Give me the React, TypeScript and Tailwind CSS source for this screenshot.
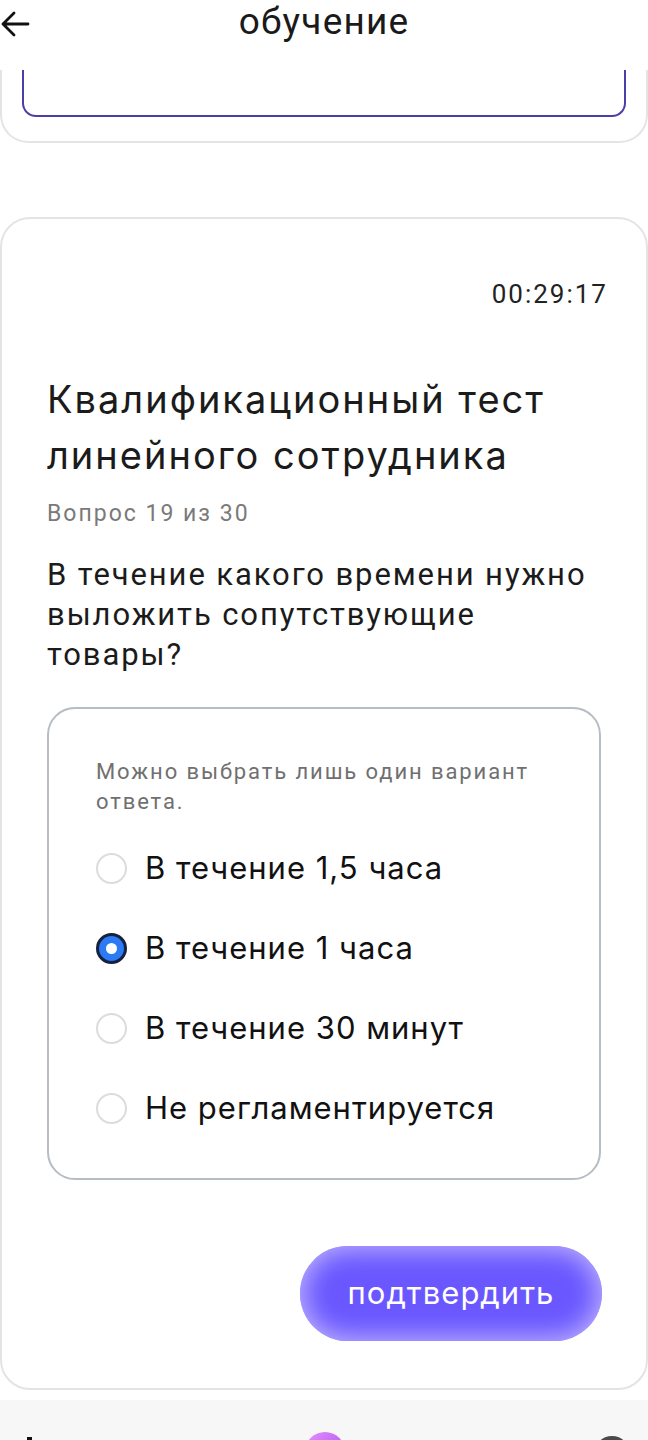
import React from "react";

const options = [
  "В течение 1,5 часа",
  "В течение 1 часа",
  "В течение 30 минут",
  "Не регламентируется",
];

export default function App() {
  const selected = 1;
  return (
    <div className="w-[648px] h-[1440px] overflow-hidden bg-white flex flex-col" style={{ fontFamily: "Inter, 'Noto Sans', sans-serif" }}>
      {/* header */}
      <div className="h-[70px] shrink-0 relative flex items-start justify-center bg-white">
        <svg className="absolute left-0 top-[10px]" width="30" height="28" viewBox="0 0 30 28" fill="none">
          <path d="M28 14H3M14 3L3 14L14 25" stroke="#111" strokeWidth="2.8" strokeLinecap="round" strokeLinejoin="round" />
        </svg>
        <span className="text-[37px] leading-[44px] tracking-[1.2px] text-[#1a1a1a]" style={{ fontFamily: "Roboto, Arial, sans-serif" }}>обучение</span>
      </div>
      {/* previous card remnant */}
      <div className="h-[73px] shrink-0 border-x-2 border-b-2 border-[#e4e4e4] rounded-b-[28px] px-[20px]">
        <div className="h-[47px] border-x-2 border-b-2 border-[#4a3ea8] rounded-b-[14px]" />
      </div>
      <div className="h-[74px] shrink-0" />
      {/* main card */}
      <div className="h-[1173px] shrink-0 border-2 border-[#e4e4e4] rounded-[30px] flex flex-col pl-[45px] pr-[45px] pt-[59px]">
        <div className="text-right text-[26px] leading-[32px] tracking-[2px] text-[#222] mr-[-7px]" style={{ fontFamily: "Roboto, Arial, sans-serif" }}>00:29:17</div>
        <div className="mt-[61px] text-[38px] leading-[56px] tracking-[2px] text-[#1b1b1b] whitespace-nowrap">
          Квалификационный тест<br />линейного сотрудника
        </div>
        <div className="mt-[16px] text-[23px] leading-[30px] tracking-[2px] text-[#7a7a7a]" style={{ fontFamily: "Roboto, Arial, sans-serif" }}>Вопрос 19 из 30</div>
        <div className="mt-[26px] text-[31px] leading-[40px] tracking-[1.9px] text-[#1b1b1b] whitespace-nowrap" style={{ fontFamily: "Roboto, Arial, sans-serif" }}>
          В течение какого времени нужно<br />выложить сопутствующие<br />товары?
        </div>
        <div className="mt-[32px] border-2 border-[#b6bdc4] rounded-[28px] pl-[47px] pr-[20px] pt-[48px] pb-[30px] flex flex-col">
          <div className="text-[22px] leading-[30px] tracking-[1.9px] text-[#707070] whitespace-nowrap" style={{ fontFamily: "Roboto, Arial, sans-serif" }}>
            Можно выбрать лишь один вариант<br />ответа.
          </div>
          <div className="mt-[11px] flex flex-col">
            {options.map((o, i) => (
              <div key={o} className="h-[80px] flex items-center gap-[18px]">
                {i === selected ? (
                  <div className="w-[31px] h-[31px] rounded-full bg-[#2a7bf5] border-[3px] border-[#16213d] flex items-center justify-center">
                    <div className="w-[11px] h-[11px] rounded-full bg-white" />
                  </div>
                ) : (
                  <div className="w-[31px] h-[31px] rounded-full border-2 border-[#dcdcdc] bg-white" />
                )}
                <span className="text-[31px] leading-[40px] tracking-[1px] text-[#111] whitespace-nowrap">{o}</span>
              </div>
            ))}
          </div>
        </div>
        <div className="mt-[66px] flex justify-end mr-[-1px]">
          <div
            className="w-[302px] h-[95px] rounded-full bg-[#6a57ff] flex items-center justify-center text-white text-[31px] tracking-[1px]"
            style={{ boxShadow: "inset 0 0 26px 4px rgba(200,190,255,0.9)" }}
          >
            подтвердить
          </div>
        </div>
      </div>
      {/* bottom nav */}
      <div className="mt-[10px] flex-1 bg-[#f7f7f7] relative">
        <div className="absolute left-[27px] top-[37px] w-[5px] h-[10px] bg-[#111]" />
        <div className="absolute left-[305px] top-[32px] w-[40px] h-[40px] rounded-full bg-gradient-to-br from-[#e590ff] to-[#a542e8]" />
        <div className="absolute left-[594px] top-[36px] w-[36px] h-[36px] rounded-full bg-[#4a4a4a]" />
      </div>
    </div>
  );
}
